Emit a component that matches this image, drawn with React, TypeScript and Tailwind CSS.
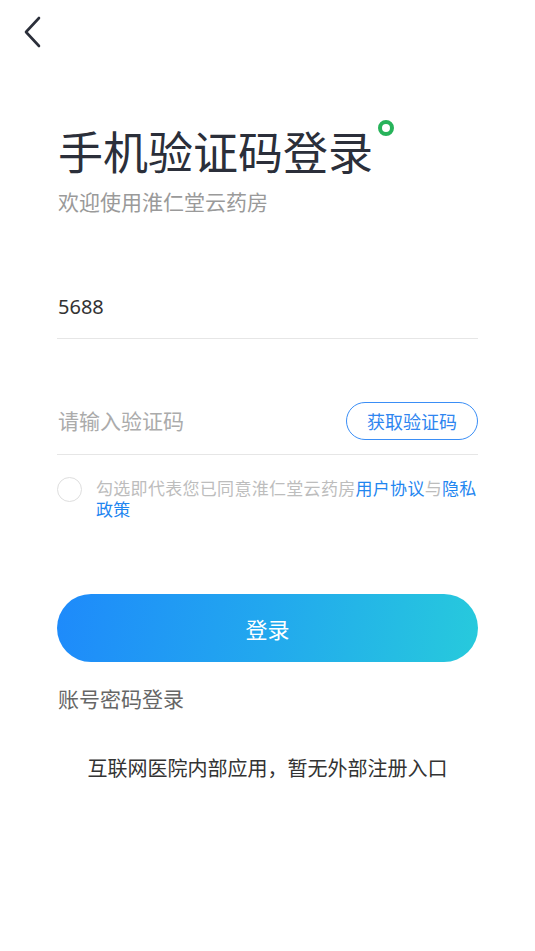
import React from "react";

export default function App() {
  return (
    <div
      className="w-[535px] h-[951px] bg-white relative overflow-hidden"
      style={{ fontFamily: '"Noto Sans CJK SC", "Noto Sans", sans-serif' }}
    >
      <div className="h-[60px] pt-[16px] pl-[22px]">
        <svg width="20" height="32" viewBox="0 0 20 32" fill="none">
          <path d="M17 2 L4 16 L17 30" stroke="#2b2f3a" strokeWidth="2.6" strokeLinecap="round" strokeLinejoin="round" />
        </svg>
      </div>
      <div className="px-[57px]">
        <div className="mt-[62px] flex items-start">
          <div className="text-[45px] leading-[58px] text-[#2b2f3a] pl-[1px]">手机验证码登录</div>
          <div className="mt-[-2px] ml-[5px] w-[16px] h-[16px] rounded-full border-[4px] border-[#27b35a]" />
        </div>
        <div className="mt-[7px] text-[21px] leading-[28px] text-[#9a9a9a] pl-[1px]">欢迎使用淮仁堂云药房</div>

        <div className="mt-[61px] h-[63px] flex items-center border-b border-[#e6e6e6]">
          <span className="text-[20px] text-[#333] pl-[1px]" style={{ fontFamily: '"Noto Sans", "Noto Sans CJK SC", sans-serif' }}>5688</span>
        </div>

        <div className="mt-[49px] h-[67px] flex items-center justify-between border-b border-[#e6e6e6]">
          <span className="text-[21px] text-[#ababab] pl-[1px]">请输入验证码</span>
          <div className="w-[132px] h-[38px] rounded-full border border-[#3a8ef6] flex items-center justify-center text-[18px] text-[#2f86f0]">
            获取验证码
          </div>
        </div>

        <div className="mt-[22px] flex items-start">
          <div className="w-[25px] h-[25px] rounded-full border border-[#dedede] shrink-0" />
          <p className="ml-[14px] text-[17px] leading-[21px] tracking-[0.3px] text-[#bdbdbd]">
            勾选即代表您已同意淮仁堂云药房<span className="text-[#1f86f0]">用户协议</span>与<span className="text-[#1f86f0]">隐私政策</span>
          </p>
        </div>

        <div
          className="mt-[75px] h-[68px] rounded-full flex items-center justify-center text-white text-[22px]"
          style={{ background: "linear-gradient(100deg, #1e8afb 0%, #22a8ee 50%, #27cadc 100%)" }}
        >
          登录
        </div>

        <div className="mt-[22px] text-[21px] leading-[28px] text-[#666] pl-[1px]">账号密码登录</div>
      </div>
      <div className="mt-[42px] text-center text-[20px] leading-[28px] text-[#333]">
        互联网医院内部应用，暂无外部注册入口
      </div>
    </div>
  );
}
